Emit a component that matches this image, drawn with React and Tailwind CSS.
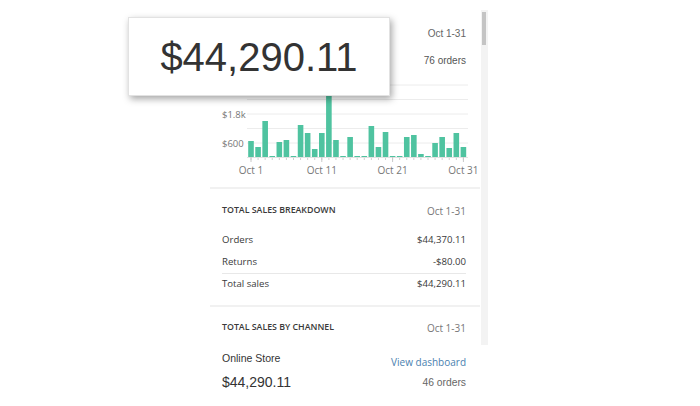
import React from "react";

const bars = [16, 10, 36, 1, 15, 17, 1, 32, 24, 8, 24, 64, 17, 1, 20, 1, 1, 31, 10, 25, 1, 1, 20, 22, 3, 1, 14, 20, 9, 24, 10];

function Chart() {
  const base = 79;
  const x0 = 29;
  const pitch = 7.08;
  const grid = [7, 21.5, 36, 50.5, 65];
  const labels = [
    { i: 0, t: "Oct 1" },
    { i: 10, t: "Oct 11" },
    { i: 20, t: "Oct 21" },
    { i: 30, t: "Oct 31" },
  ];
  return (
    <svg width="256" height="100" viewBox="0 0 256 100" className="block overflow-visible">
      {grid.map((y) => (
        <line key={y} x1="25" x2="246" y1={y} y2={y} stroke="#ececec" strokeWidth="1" />
      ))}
      <text x="0" y="39.5" fontSize="9.5" fill="#777" fontFamily="'Open Sans', sans-serif">$1.8k</text>
      <text x="0" y="68.5" fontSize="9.5" fill="#777" fontFamily="'Open Sans', sans-serif">$600</text>
      {bars.map((h, i) => {
        const cx = x0 + i * pitch;
        return (
          <g key={i}>
            <rect x={cx - 2.8} y={base - h} width="5.6" height={h} fill="#4fc3a0" />
            <line x1={cx} x2={cx} y1={base} y2={base + 3} stroke="#d0d0d0" strokeWidth="1" />
          </g>
        );
      })}
      <line x1="25" x2="246" y1={base + 0.5} y2={base + 0.5} stroke="#e2e2e2" strokeWidth="1" />
      {labels.map((l) => {
        const cx = x0 + l.i * pitch;
        return (
          <g key={l.t}>
            <line x1={cx} x2={cx} y1={base} y2={base + 5} stroke="#c8c8c8" strokeWidth="1" />
            <text x={cx} y="95.5" fontSize="10" fill="#777" textAnchor="middle" fontFamily="'Open Sans', sans-serif">
              {l.t}
            </text>
          </g>
        );
      })}
    </svg>
  );
}

export default function App() {
  return (
    <div className="relative flex w-[700px] h-[406px] overflow-hidden bg-white">
      <div className="w-[210px] shrink-0" />
      <div className="flex w-[270px] shrink-0 flex-col">
        {/* Top section */}
        <div className="flex h-[187px] flex-col pl-[12px] pr-[14px]">
          <div className="mt-[26px] flex h-[14px] items-center justify-end">
            <span className="text-[10px] text-[#666]" style={{ fontFamily: "'Liberation Sans', Arial, sans-serif" }}>Oct 1-31</span>
          </div>
          <div className="mt-[10px] flex h-[20px] items-center justify-end">
            <span className="text-[10px] text-[#555]" style={{ fontFamily: "'Liberation Sans', Arial, sans-serif" }}>76 orders</span>
          </div>
          <div className="mt-[8px]">
            <Chart />
          </div>
        </div>

        {/* Breakdown */}
        <div className="border-t-2 border-[#f1f1f1] pl-[12px] pr-[14px] pt-[15px] pb-[10px]" style={{ fontFamily: "'Open Sans', sans-serif" }}>
          <div className="flex h-[14px] items-center justify-between">
            <span className="text-[8.8px] font-semibold uppercase text-[#3a3a3a]">Total sales breakdown</span>
            <span className="text-[10px] text-[#777]">Oct 1-31</span>
          </div>
          <div className="mt-[11px] flex h-[22px] items-center justify-between text-[9.6px] text-[#3a3a3a]">
            <span>Orders</span>
            <span>$44,370.11</span>
          </div>
          <div className="flex h-[22px] items-center justify-between text-[9.6px] text-[#3a3a3a]">
            <span>Returns</span>
            <span>-$80.00</span>
          </div>
          <div className="flex h-[22px] items-center justify-between border-t border-[#e8e8e8] text-[9.6px] text-[#3a3a3a]">
            <span>Total sales</span>
            <span>$44,290.11</span>
          </div>
        </div>

        {/* By channel */}
        <div className="border-t-2 border-[#f1f1f1] pl-[12px] pr-[14px] pt-[14px]">
          <div className="flex h-[14px] items-center justify-between" style={{ fontFamily: "'Open Sans', sans-serif" }}>
            <span className="text-[8.8px] font-semibold uppercase text-[#3a3a3a]">Total sales by channel</span>
            <span className="text-[10px] text-[#777]">Oct 1-31</span>
          </div>
          <div className="mt-[17px] flex justify-between" style={{ fontFamily: "'Liberation Sans', Arial, sans-serif" }}>
            <div className="flex flex-col">
              <span className="flex h-[14px] items-center text-[10.5px] text-[#333]">Online Store</span>
              <span className="mt-[7px] flex h-[18px] items-center text-[14px] text-[#333]">$44,290.11</span>
            </div>
            <div className="flex flex-col items-end">
              <span className="mt-[3px] flex h-[14px] items-center text-[10px] text-[#4a7fb0]" style={{ fontFamily: "'Open Sans', sans-serif" }}>View dashboard</span>
              <span className="mt-[7px] flex h-[14px] items-center text-[10.3px] text-[#666]">46 orders</span>
            </div>
          </div>
        </div>
      </div>

      {/* Scrollbar */}
      <div className="ml-[1px] w-[7px] shrink-0 pt-[10px]">
        <div className="h-[335px] w-[7px] bg-[#f3f3f3] pt-[2px] pl-[1px]">
          <div className="h-[33px] w-[4px] bg-[#c4c4c4]" />
        </div>
      </div>

      {/* Magnifier callout */}
      <div className="absolute left-[128px] top-[17px] flex h-[79px] w-[262px] items-center justify-center border border-[#e2e2e2] bg-white shadow-[2px_3px_7px_rgba(0,0,0,0.35)]">
        <span className="text-[40px] leading-none text-[#333]" style={{ fontFamily: "'Liberation Sans', Arial, sans-serif" }}>
          $44,290.11
        </span>
      </div>
    </div>
  );
}
